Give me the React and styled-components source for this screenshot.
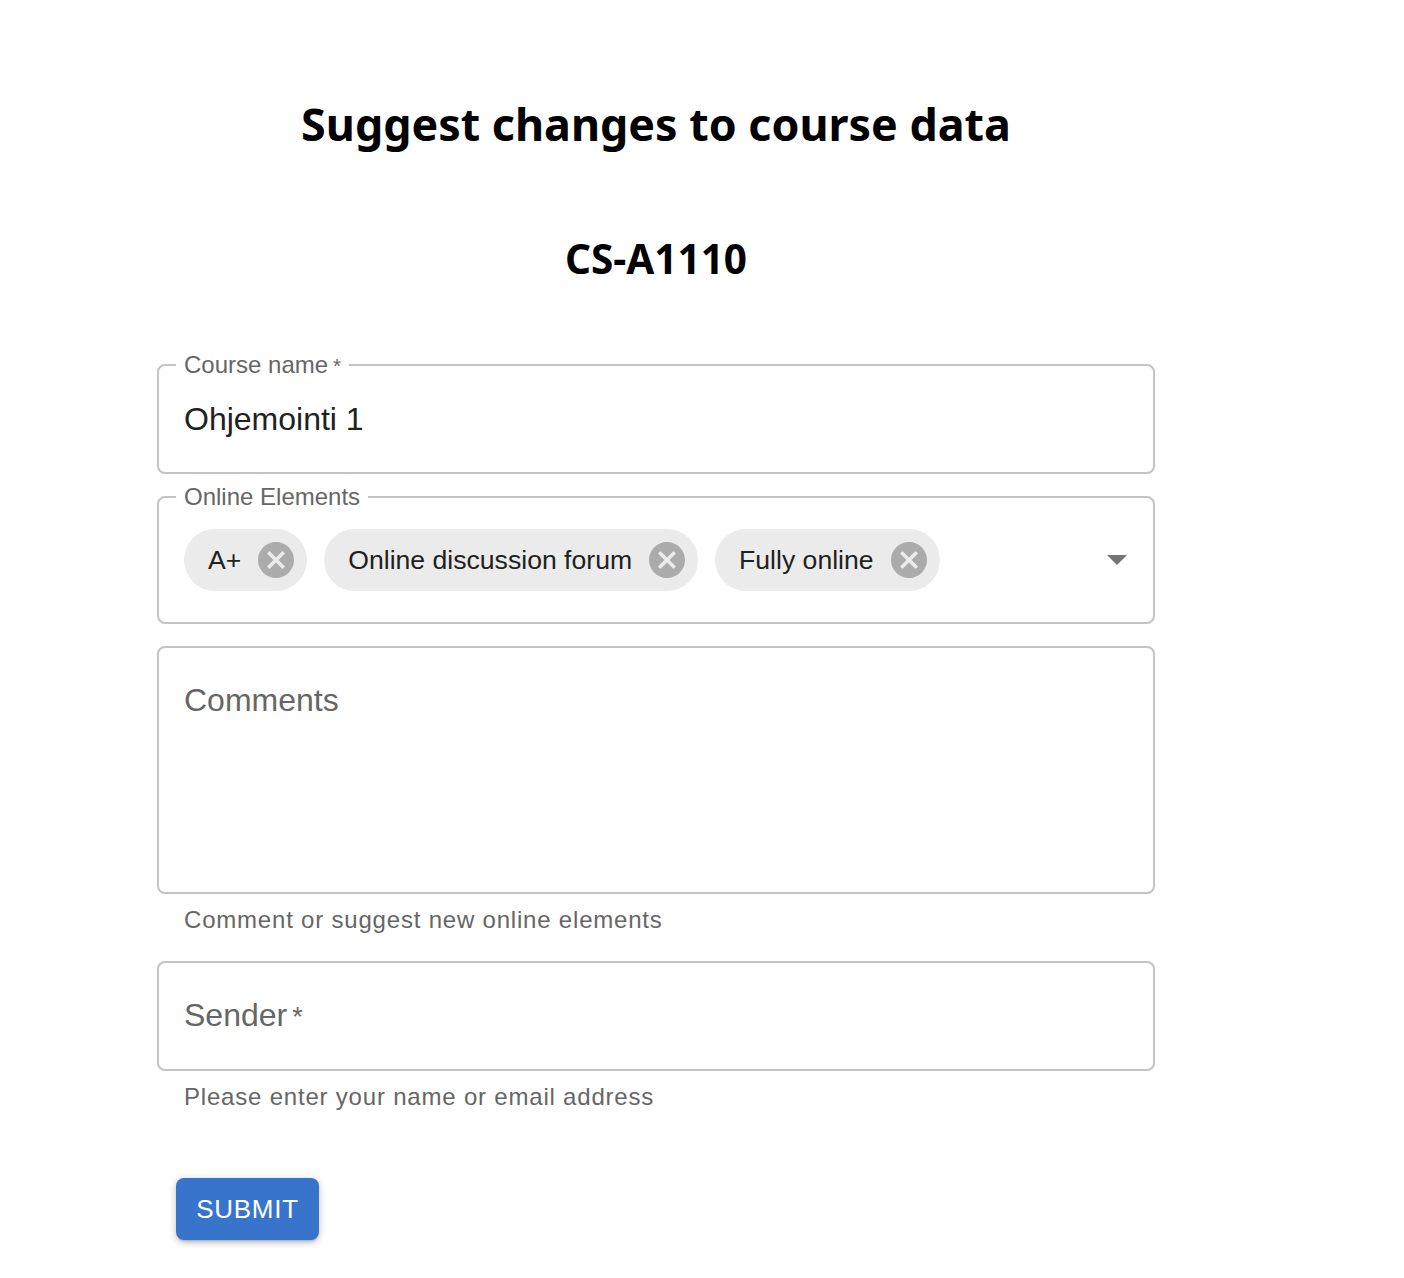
import React from 'react'
import styled, { createGlobalStyle } from 'styled-components'

const GlobalStyle = createGlobalStyle`
  body {
    margin: 0;
    background: #fff;
    font-family: "Liberation Sans", Arial, sans-serif;
  }
`

const Page = styled.main`
  width: 998px;
  margin-left: 157px;
  padding-bottom: 36px;
`

const Title = styled.h1`
  margin: 0;
  padding-top: 95px;
  text-align: center;
  font-family: "Noto Sans", sans-serif;
  font-weight: 700;
  font-size: 44.8px;
  line-height: 58px;
  color: #000;
`

const Code = styled.h2`
  margin: 0;
  padding-top: 83px;
  text-align: center;
  font-family: "Noto Sans", sans-serif;
  font-weight: 700;
  font-size: 40.5px;
  line-height: 46px;
  color: #000;
`

const Form = styled.form`
  display: flex;
  flex-direction: column;
  margin-top: 82px;
`

const Box = styled.div`
  position: relative;
  display: flex;
  align-items: ${p => (p.$multiline ? 'flex-start' : 'center')};
  height: ${p => p.$height}px;
  box-sizing: border-box;
  border: 2px solid #c4c4c4;
  border-radius: 8px;
  padding: ${p => (p.$multiline ? '33px 25px 0' : '0 25px')};
  margin-top: ${p => p.$gap || 0}px;
`

const FloatLabel = styled.span`
  position: absolute;
  top: -15px;
  left: 17px;
  padding: 0 8px;
  background: #fff;
  font-size: 24px;
  line-height: 28px;
  color: #666;
  white-space: nowrap;
`

const Star = styled.span`
  margin-left: 5px;
  font-size: 0.85em;
`

const Value = styled.span`
  font-size: 32px;
  line-height: 38px;
  color: #212121;
`

const Placeholder = styled.span`
  font-size: 32px;
  line-height: 38px;
  color: #666;
`

const Helper = styled.p`
  margin: 12px 0 0;
  padding-left: 27px;
  font-size: 24px;
  line-height: 28px;
  letter-spacing: 0.8px;
  color: #666;
`

const Chips = styled.div`
  display: flex;
  flex: 1;
  gap: 17px;
`

const Chip = styled.span`
  display: inline-flex;
  align-items: center;
  gap: 17px;
  height: 62px;
  padding: 0 13px 0 24px;
  border-radius: 31px;
  background: #ebebeb;
  font-size: 26.6px;
  color: #212121;
  white-space: nowrap;
`

const DeleteIcon = styled.svg`
  width: 36px;
  height: 36px;
  flex-shrink: 0;
  fill: #ababab;
`

const Arrow = styled.svg`
  width: 20px;
  height: 10px;
  fill: #757575;
  margin-right: 1px;
`

const Submit = styled.button`
  align-self: flex-start;
  margin: 67px 0 0 19px;
  width: 143px;
  height: 62px;
  border: none;
  border-radius: 8px;
  background: #3874cb;
  color: #fff;
  font-family: "Liberation Sans", Arial, sans-serif;
  font-size: 26px;
  letter-spacing: 0.74px;
  box-shadow: 0 3px 3px -2px rgba(0, 0, 0, 0.2), 0 3px 6px 0 rgba(0, 0, 0, 0.14), 0 1px 10px 0 rgba(0, 0, 0, 0.12);
`

const elements = ['A+', 'Online discussion forum', 'Fully online']

const App = () => {
  return (
    <>
      <GlobalStyle />
      <Page>
        <Title>Suggest changes to course data</Title>
        <Code>CS-A1110</Code>
        <Form>
          <Box $height={110}>
            <FloatLabel>Course name<Star>*</Star></FloatLabel>
            <Value>Ohjemointi 1</Value>
          </Box>
          <Box $height={128} $gap={22}>
            <FloatLabel>Online Elements</FloatLabel>
            <Chips>
              {elements.map(el => (
                <Chip key={el}>
                  {el}
                  <DeleteIcon viewBox="2 2 20 20">
                    <path d="M12 2C6.47 2 2 6.47 2 12s4.47 10 10 10 10-4.47 10-10S17.53 2 12 2zm5 13.59L15.590 17 12 13.41 8.41 17 7 15.59 10.59 12 7 8.41 8.41 7 12 10.59 15.59 7 17 8.41 13.41 12 17 15.59z" />
                  </DeleteIcon>
                </Chip>
              ))}
            </Chips>
            <Arrow viewBox="7 10 10 5">
              <path d="M7 10l5 5 5-5z" />
            </Arrow>
          </Box>
          <Box $height={248} $gap={22} $multiline>
            <Placeholder>Comments</Placeholder>
          </Box>
          <Helper>Comment or suggest new online elements</Helper>
          <Box $height={110} $gap={27}>
            <Placeholder>Sender<Star>*</Star></Placeholder>
          </Box>
          <Helper>Please enter your name or email address</Helper>
          <Submit type="button">SUBMIT</Submit>
        </Form>
      </Page>
    </>
  )
}

export default App
